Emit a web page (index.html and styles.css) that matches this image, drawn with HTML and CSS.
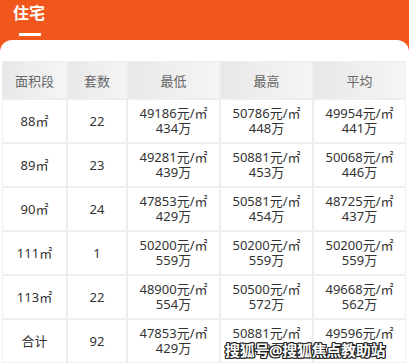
FILE: index.html
```html
<!DOCTYPE html>
<html lang="zh">
<head>
<meta charset="utf-8">
<link rel="stylesheet" href="styles.css">
</head>
<body>
<div class="page">
  <div class="topbar">
    <div class="tab">
      <span class="tab-title">住宅</span>
      <span class="tab-line"></span>
    </div>
  </div>
  <div class="card">
    <table class="price-table">
      <colgroup>
        <col class="c1"><col class="c2"><col class="c3"><col class="c4"><col class="c5">
      </colgroup>
      <thead>
        <tr><th>面积段</th><th>套数</th><th>最低</th><th>最高</th><th>平均</th></tr>
      </thead>
      <tbody>
        <tr><td>88㎡</td><td>22</td><td>49186元/㎡<br>434万</td><td>50786元/㎡<br>448万</td><td>49954元/㎡<br>441万</td></tr>
        <tr><td>89㎡</td><td>23</td><td>49281元/㎡<br>439万</td><td>50881元/㎡<br>453万</td><td>50068元/㎡<br>446万</td></tr>
        <tr><td>90㎡</td><td>24</td><td>47853元/㎡<br>429万</td><td>50581元/㎡<br>454万</td><td>48725元/㎡<br>437万</td></tr>
        <tr><td>111㎡</td><td>1</td><td>50200元/㎡<br>559万</td><td>50200元/㎡<br>559万</td><td>50200元/㎡<br>559万</td></tr>
        <tr><td>113㎡</td><td>22</td><td>48900元/㎡<br>554万</td><td>50500元/㎡<br>572万</td><td>49668元/㎡<br>562万</td></tr>
        <tr><td>合计</td><td>92</td><td>47853元/㎡<br>429万</td><td>50881元/㎡<br>429万</td><td>49596元/㎡<br>429万</td></tr>
      </tbody>
    </table>
  </div>
  <div class="watermark">搜狐号@搜狐焦点教助站</div>
</div>
</body>
</html>
```

FILE: styles.css
```css
html, body {
  margin: 0;
  padding: 0;
  background: #ffffff;
}
.page {
  position: relative;
  width: 409px;
  height: 364px;
  overflow: hidden;
  background: #f1561c;
  font-family: "Noto Sans", "Noto Sans CJK SC", sans-serif;
}
.topbar {
  height: 40px;
  padding-left: 13px;
  box-sizing: border-box;
}
.tab {
  display: inline-flex;
  flex-direction: column;
  align-items: center;
}
.tab-title {
  color: #ffffff;
  font-size: 16px;
  font-weight: bold;
  line-height: 22px;
  margin-top: 2px;
}
.tab-line {
  width: 22px;
  height: 3px;
  background: #ffffff;
  margin-top: 9px;
  margin-left: 2px;
}
.card {
  background: #ffffff;
  border-radius: 12px 12px 0 0;
  padding: 21px 3px 0 2px;
  height: 324px;
  box-sizing: border-box;
}
.price-table {
  table-layout: fixed;
  border-collapse: separate;
  border-spacing: 0;
  width: 404px;
}
.c1 { width: 65px; }
.c2 { width: 60px; }
.c3 { width: 93px; }
.c4 { width: 93px; }
.c5 { width: 93px; }
.price-table th,
.price-table td {
  border: 1px solid #eeeeee;
  padding: 0;
  text-align: center;
  font-size: 13px;
}
.price-table th {
  height: 36px;
  font-weight: normal;
  color: #666666;
  background: linear-gradient(to right, #e8e8e8, #f5f5f5);
}
.price-table td {
  height: 42px;
  color: #333333;
  line-height: 15px;
}
.watermark {
  position: absolute;
  left: 225px;
  top: 339px;
  font-size: 15px;
  font-weight: bold;
  color: #ffffff;
  letter-spacing: -0.3px;
  text-shadow: 1px 0 0 #222, -1px 0 0 #222, 0 1px 0 #222, 0 -1px 0 #222, 1px 1px 0 #222, -1px -1px 0 #222, 1px -1px 0 #222, -1px 1px 0 #222;
}
```
